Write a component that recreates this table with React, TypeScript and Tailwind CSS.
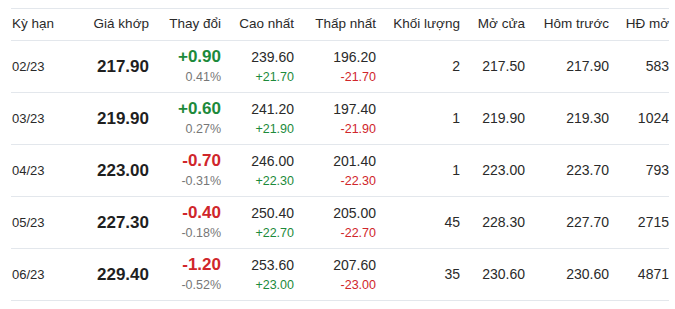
import React from "react";

type Row = {
  term: string;
  price: string;
  chg: string;
  pct: string;
  up: boolean;
  high: string;
  highChg: string;
  low: string;
  lowChg: string;
  vol: string;
  open: string;
  prev: string;
  oi: string;
};

const rows: Row[] = [
  { term: "02/23", price: "217.90", chg: "+0.90", pct: "0.41%", up: true, high: "239.60", highChg: "+21.70", low: "196.20", lowChg: "-21.70", vol: "2", open: "217.50", prev: "217.90", oi: "583" },
  { term: "03/23", price: "219.90", chg: "+0.60", pct: "0.27%", up: true, high: "241.20", highChg: "+21.90", low: "197.40", lowChg: "-21.90", vol: "1", open: "219.90", prev: "219.30", oi: "1024" },
  { term: "04/23", price: "223.00", chg: "-0.70", pct: "-0.31%", up: false, high: "246.00", highChg: "+22.30", low: "201.40", lowChg: "-22.30", vol: "1", open: "223.00", prev: "223.70", oi: "793" },
  { term: "05/23", price: "227.30", chg: "-0.40", pct: "-0.18%", up: false, high: "250.40", highChg: "+22.70", low: "205.00", lowChg: "-22.70", vol: "45", open: "228.30", prev: "227.70", oi: "2715" },
  { term: "06/23", price: "229.40", chg: "-1.20", pct: "-0.52%", up: false, high: "253.60", highChg: "+23.00", low: "207.60", lowChg: "-23.00", vol: "35", open: "230.60", prev: "230.60", oi: "4871" },
];

const cols = "grid grid-cols-[64px_74px_72px_73px_82px_84px_65px_84px_60px]";

export default function App() {
  return (
    <div
      className="w-[675px] h-[309px] bg-white overflow-hidden pt-2 pl-[11px]"
      style={{ fontFamily: '"Liberation Sans", Arial, sans-serif' }}
    >
      <div className="w-[658px] text-[#222]">
        <div className={`${cols} h-[33px] items-center border-t border-b border-[#e3e7ec] text-[13.5px] text-[#2a2a2a]`}>
          <div className="pl-px">Kỳ hạn</div>
          <div className="text-right">Giá khớp</div>
          <div className="text-right">Thay đổi</div>
          <div className="text-right">Cao nhất</div>
          <div className="text-right">Thấp nhất</div>
          <div className="text-right">Khối lượng</div>
          <div className="text-right">Mở cửa</div>
          <div className="text-right">Hôm trước</div>
          <div className="text-right whitespace-nowrap">HĐ mở</div>
        </div>
        {rows.map((r) => (
          <div key={r.term} className={`${cols} h-[52px] items-center border-b border-[#e3e7ec]`}>
            <div className="pl-px text-[13px] text-[#2a2a2a]">{r.term}</div>
            <div className="text-right text-[17px] font-bold text-[#1f1f1f]">{r.price}</div>
            <div className="text-right flex flex-col items-end">
              <span className={`text-[17px] font-bold leading-[20px] ${r.up ? "text-[#1d8a3b]" : "text-[#d0262b]"}`}>{r.chg}</span>
              <span className="text-[12.5px] leading-[20px] text-[#777]">{r.pct}</span>
            </div>
            <div className="text-right flex flex-col items-end">
              <span className="text-[14px] leading-[20px] text-[#2a2a2a]">{r.high}</span>
              <span className="text-[12.5px] leading-[20px] text-[#1d8a3b]">{r.highChg}</span>
            </div>
            <div className="text-right flex flex-col items-end">
              <span className="text-[14px] leading-[20px] text-[#2a2a2a]">{r.low}</span>
              <span className="text-[12.5px] leading-[20px] text-[#d0262b]">{r.lowChg}</span>
            </div>
            <div className="text-right text-[14px] text-[#2a2a2a]">{r.vol}</div>
            <div className="text-right text-[14px] text-[#2a2a2a]">{r.open}</div>
            <div className="text-right text-[14px] text-[#2a2a2a]">{r.prev}</div>
            <div className="text-right text-[14px] text-[#2a2a2a]">{r.oi}</div>
          </div>
        ))}
      </div>
    </div>
  );
}
